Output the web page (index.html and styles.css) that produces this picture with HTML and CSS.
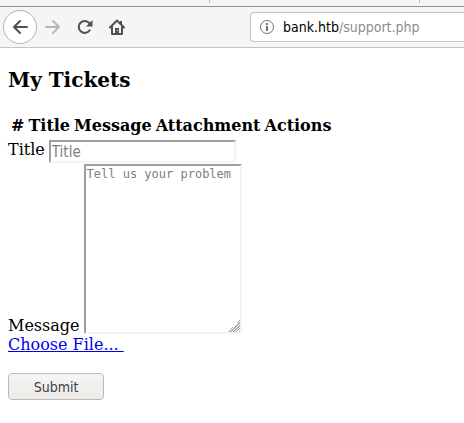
FILE: index.html
```html
<!DOCTYPE html>
<html lang="en">
<head>
<meta charset="utf-8">
<title>My Tickets</title>
<link rel="stylesheet" href="styles.css">
</head>
<body>
<header class="browser">
  <div class="tabs"><span class="tab"></span><span class="tab"></span></div>
  <nav class="toolbar">
    <button class="nav back" type="button" aria-label="Back"><svg width="16" height="16" viewBox="0 0 16 16"><path d="M15 8H2M8 2L2 8l6 6"/></svg></button>
    <button class="nav" type="button" aria-label="Forward" disabled><svg width="16" height="16" viewBox="0 0 16 16"><path d="M1 8h13M8 2l6 6-6 6"/></svg></button>
    <button class="nav" type="button" aria-label="Reload"><svg width="16" height="16" viewBox="0 0 16 16"><path d="M12.7 11.3A6 6 0 1 1 12.3 4L14 6"/><path class="solid" d="M15.5 1v6.5H9z"/></svg></button>
    <button class="nav" type="button" aria-label="Home"><svg width="16" height="16" viewBox="0 0 16 16"><path d="M1 8.5L8 1.5l7 7M3 8v7h10V8"/><path class="solid" d="M6 9h4v6H6zM11 2h2v4l-2-2z"/><path class="hole" d="M8 11h1v1H8z"/></svg></button>
    <div class="address">
      <svg width="16" height="16" viewBox="0 0 16 16"><circle cx="8" cy="8" r="6.5"/><path d="M8 7v5M8 4v2"/></svg>
      <span class="url">bank.htb<span class="path">/support.php</span></span>
    </div>
  </nav>
</header>
<main class="page">
  <h2>My Tickets</h2>
  <table>
    <thead><tr><th>#</th><th>Title</th><th>Message</th><th>Attachment</th><th>Actions</th></tr></thead>
  </table>
  <form>
    <div class="row"><label for="title">Title</label><input id="title" type="text" placeholder="Title"></div>
    <div class="row message"><label for="message">Message</label><textarea id="message" placeholder="Tell us your problem"></textarea></div>
    <a class="file" href="#">Choose File... </a>
    <button class="submit" type="submit">Submit</button>
  </form>
</main>
</body>
</html>
```
FILE: styles.css
```css
* {
  box-sizing: border-box;
}

body {
  margin: 0;
  background: #fff;
  color: #000;
  font: 16px/19px "DejaVu Serif", serif;
}

.browser {
  background: #f6f5f4;
  border-bottom: 1px solid #c4c2bf;
}

.tabs {
  display: flex;
  height: 7px;
  border-bottom: 1px solid #93938d;
}

.tab {
  flex: 0 0 210px;
  height: 3px;
  border-right: 1px solid #bbb9b6;
}

.toolbar {
  display: flex;
  align-items: center;
  height: 40px;
  padding-left: 3px;
}

.nav {
  display: flex;
  align-items: center;
  justify-content: center;
  width: 32px;
  height: 32px;
  padding: 0;
  border: 0;
  background: none;
  color: #4b5254;
}

.nav.back {
  width: 34px;
  height: 34px;
  border: 1px solid #b5b3b0;
  border-radius: 50%;
  background: #fff;
}

.nav:disabled {
  color: #b7b7b5;
}

.nav svg {
  fill: none;
  stroke: currentColor;
  stroke-width: 2;
  stroke-linecap: round;
  stroke-linejoin: round;
}

.nav .solid {
  fill: currentColor;
  stroke: none;
}

.nav .hole {
  fill: #fff;
  stroke: none;
}

.address {
  display: flex;
  flex: 1;
  align-items: center;
  gap: 8px;
  height: 30px;
  margin-left: 117px;
  padding-left: 8px;
  border: 1px solid #c9c2bc;
  border-right: 0;
  border-radius: 4px 0 0 4px;
  background: #fff;
}

.address svg {
  fill: none;
  stroke: #737373;
  stroke-width: 1;
}

.address path {
  stroke-width: 2;
}

.url {
  font: 14px/18px "DejaVu Sans Condensed", "DejaVu Sans", sans-serif;
  font-stretch: condensed;
}

.path {
  color: #8c8c8c;
}

.page {
  padding: 20px 8px;
}

h2 {
  margin: 0 0 21px;
  font-size: 20px;
  line-height: 24px;
}

table {
  border-spacing: 2px;
}

th {
  padding: 1px;
  line-height: 20px;
}

.row {
  display: flex;
  align-items: flex-start;
  gap: 4px;
}

.row input,
.row textarea {
  border: 2px solid;
  border-color: #9f9f9f #f3f3f3 #f3f3f3 #9f9f9f;
  background: #fff;
}

.row input {
  width: 187px;
  height: 23px;
  margin: 1px 0;
  padding: 1px;
  font: 15px/17px "DejaVu Sans Condensed", "DejaVu Sans", sans-serif;
  font-stretch: condensed;
}

.row label {
  padding-top: 1px;
}

.row.message {
  align-items: flex-end;
}

.row textarea {
  width: 158px;
  height: 170px;
  margin-bottom: 1px;
  padding: 1px;
  font: 12px/14px "DejaVu Sans Mono", monospace;
}

textarea::-webkit-resizer {
  background: linear-gradient(135deg, #fff 60%, transparent 60%),
    repeating-linear-gradient(135deg, #aaa 0 1px, #fff 1px 2px);
}

::placeholder {
  color: #808080;
}

.file {
  display: block;
  width: max-content;
  color: #0000ee;
  white-space: pre;
}

.submit {
  width: 96px;
  height: 27px;
  margin-top: 19px;
  padding: 0;
  border: 1px solid #bfb8b1;
  border-radius: 4px;
  background: linear-gradient(#f6f5f4, #edebe9);
  color: #3a4043;
  font: 14px/18px "DejaVu Sans Condensed", "DejaVu Sans", sans-serif;
  font-stretch: condensed;
}
```
